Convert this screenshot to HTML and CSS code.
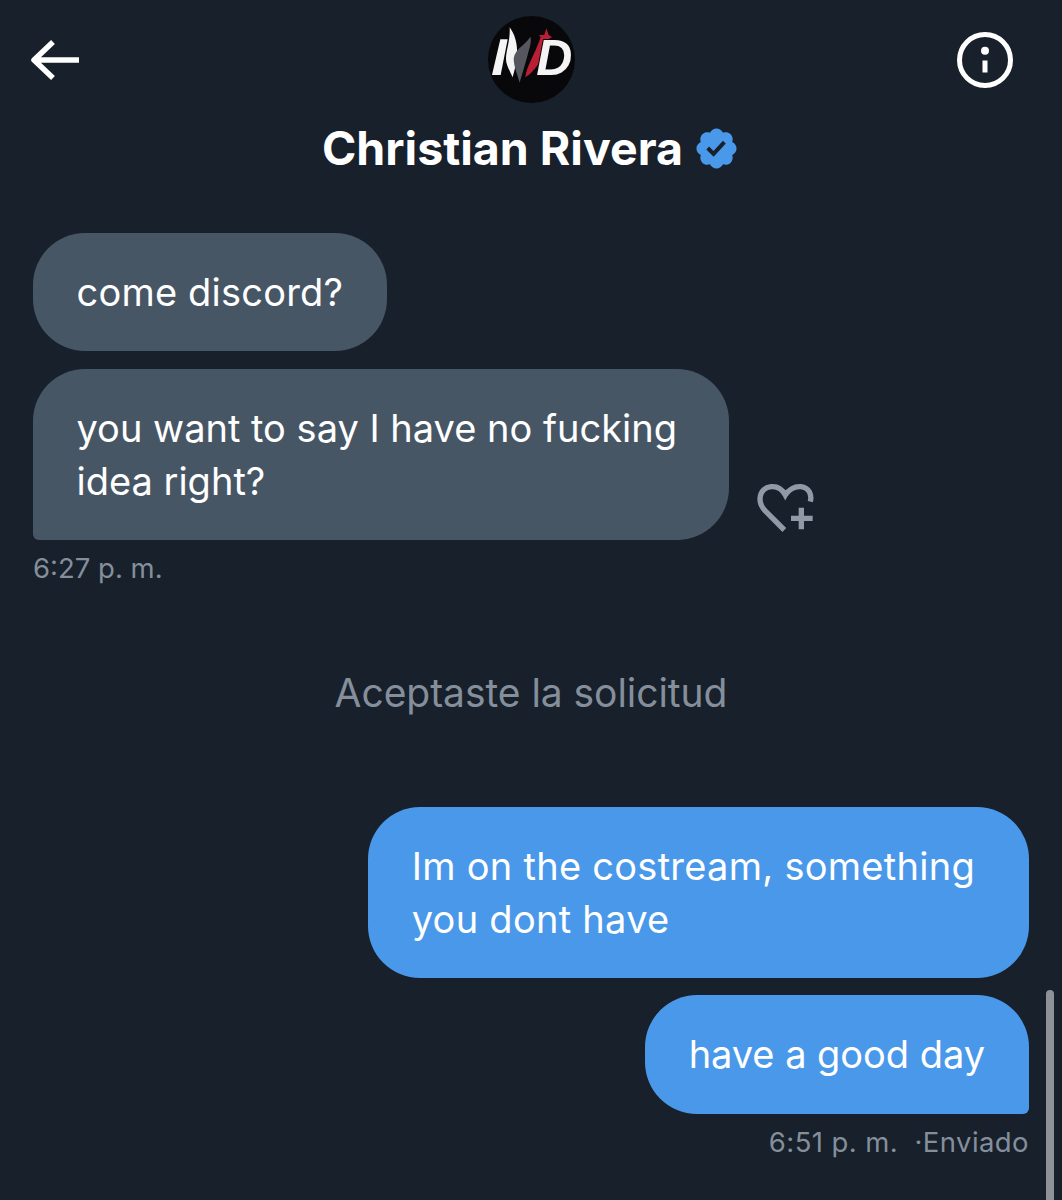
FILE: index.html
```html
<!DOCTYPE html>
<html lang="es">
<head>
<meta charset="utf-8">
<title>Christian Rivera</title>
<link rel="stylesheet" href="styles.css">
</head>
<body>
<div class="screen">
  <header class="header">
    <div class="topbar">
      <svg class="back" viewBox="0 0 56 44" aria-hidden="true"><path d="M51 22H6M25 4 6 22l19 18"/></svg>
      <svg class="avatar" viewBox="83 48 261 261" aria-hidden="true">
        <circle cx="213.500" cy="178.500" r="130.500" fill="#08080a"/>
        <path fill="#f4f4f4" d="M95 225 120 118h22l-21 107Z"/>
        <path fill="#f4f4f4" d="M148 82c17 23 24 53 22 83-2 25-8 50-13 67-7-17-20-37-20-54 0-28 13-53 11-96Z"/>
        <path fill="#55575e" d="M178 248c-6-23-18-48-18-73 5-30 35-40 50-65 5 15-3 35-8 55-7 25-17 60-24 83Z"/>
        <path fill="#b81f34" d="M195 232c3-32 28-67 46-120l-5-7h16l6-20 7 20 10 7-12 6c-6 47-38 97-68 114Z"/>
        <text class="logo-d" x="228" y="226">D</text>
      </svg>
      <svg class="info" viewBox="0 0 60 60" aria-hidden="true">
        <circle class="info-ring" cx="30" cy="30" r="25.500"/>
        <circle class="info-dot" cx="30" cy="20.700" r="4"/>
        <rect class="info-dot" x="27.500" y="30.500" width="5" height="12"/>
      </svg>
    </div>
    <div class="title">
      <span class="name">Christian Rivera</span>
      <svg class="badge" viewBox="0 0 24 24" aria-hidden="true"><path d="M22.250 12c0-1.430-.88-2.670-2.190-3.340.46-1.390.2-2.900-.81-3.910s-2.520-1.270-3.910-.81c-.66-1.310-1.910-2.190-3.340-2.190s-2.670.88-3.330 2.190c-1.400-.46-2.910-.2-3.920.81s-1.260 2.520-.8 3.910c-1.310.67-2.200 1.910-2.200 3.340s.89 2.670 2.200 3.340c-.46 1.390-.21 2.900.8 3.910s2.520 1.260 3.910.81c.67 1.310 1.910 2.190 3.340 2.190s2.680-.88 3.340-2.190c1.390.45 2.900.2 3.910-.81s1.270-2.520.81-3.910c1.310-.67 2.190-1.910 2.190-3.340zm-11.710 4.200L6.800 12.460l1.410-1.420 2.260 2.260 4.800-5.230 1.470 1.360-6.200 6.770z"/></svg>
    </div>
  </header>

  <main class="chat">
    <section class="group">
      <div class="bubble in first">come discord?</div>
      <div class="row">
        <div class="bubble in last wrapped">you want to say I have no fucking<br>idea right?</div>
        <svg class="react" viewBox="0 0 270 210" aria-hidden="true"><path d="M130 180 75 125C45 95 55 55 90 50c20-2 35 10 43 25 9-15 27-27 47-25 25 3 33 25 28 45M181 113v65M150 145h65"/></svg>
      </div>
      <div class="meta">6:27 p. m.</div>
    </section>

    <p class="notice">Aceptaste la solicitud</p>

    <section class="group out">
      <div class="bubble sent wrapped">Im on the costream, something<br>you dont have</div>
      <div class="bubble sent last">have a good day</div>
      <div class="meta">6:51 p. m. &nbsp;·Enviado</div>
    </section>
  </main>
  <div class="scrollbar"></div>
</div>
</body>
</html>
```

FILE: styles.css
```css
* { box-sizing: border-box; }
html, body { margin: 0; padding: 0; }
body {
  background: #17202b;
  font-family: "Inter", "Liberation Sans", sans-serif;
  color: #fff;
}
.screen {
  position: relative;
  width: 1062px;
  height: 1200px;
  overflow: hidden;
  background: #17202b;
}
.header {
  display: flex;
  flex-direction: column;
  align-items: center;
  padding-top: 16px;
}
.topbar {
  display: flex;
  align-items: center;
  justify-content: space-between;
  width: 100%;
  padding: 0 47px 0 28px;
  height: 87px;
}
.back {
  width: 56px;
  height: 44px;
  fill: none;
  stroke: #fff;
  stroke-width: 5.500;
  stroke-linejoin: round;
}
.avatar { width: 87px; height: 87px; margin-left: 23px; }
.logo-d {
  font-family: "Liberation Sans", sans-serif;
  font-size: 150px;
  font-weight: 700;
  font-style: italic;
  fill: #f4f4f4;
  stroke: #08080a;
  stroke-width: 6px;
  paint-order: stroke;
}
.info { width: 60px; height: 60px; }
.info-ring { fill: none; stroke: #fff; stroke-width: 5; }
.info-dot { fill: #fff; }
.title {
  display: flex;
  align-items: center;
  gap: 10px;
  margin-top: 15px;
  height: 60px;
}
.name {
  font-size: 46.500px;
  font-weight: 700;
  line-height: 60px;
}
.badge { width: 47px; height: 47px; fill: #4a98e9; }
.chat {
  display: flex;
  flex-direction: column;
  padding: 0 33px;
  margin-top: 55px;
}
.group {
  display: flex;
  flex-direction: column;
  align-items: flex-start;
  gap: 18px;
}
.group.out { align-items: flex-end; gap: 17px; }
.row {
  display: flex;
  align-items: flex-end;
  gap: 26px;
}
.bubble {
  padding: 32.500px 44px;
  border-radius: 52px;
  font-size: 38px;
  line-height: 53px;
  width: fit-content;
  white-space: nowrap;
}
.bubble.in { background: #475665; }
.bubble.in.first { letter-spacing: 0.2px; padding-left: 43.500px; }
.bubble.sent { background: #4a98e9; letter-spacing: -0.04px; }
.bubble.wrapped { padding-right: 52px; padding-left: 43.500px; }
.bubble.sent.wrapped { letter-spacing: 0.27px; padding-right: 54px; }
.bubble.in.last { border-bottom-left-radius: 6px; }
.bubble.sent.last { border-bottom-right-radius: 6px; padding-top: 33px; padding-bottom: 33px; }
.react {
  width: 90px;
  height: 70px;
  margin: 0 -90px 0 -14px;
  fill: none;
  stroke: #8f9aa6;
  stroke-width: 16;
}
.meta {
  color: #858f9b;
  font-size: 27.500px;
  line-height: 40px;
  margin-top: -10px;
}
.group.out .meta { margin-top: -9px; letter-spacing: 0.42px; }
.notice {
  margin: 78px 0 88px;
  text-align: center;
  color: #858f9b;
  font-size: 39px;
  line-height: 53px;
  letter-spacing: -0.05px;
}
.scrollbar {
  position: absolute;
  right: 8px;
  top: 990px;
  bottom: 0;
  width: 8px;
  border-radius: 4px 4px 0 0;
  background: #8d9299;
}
```
